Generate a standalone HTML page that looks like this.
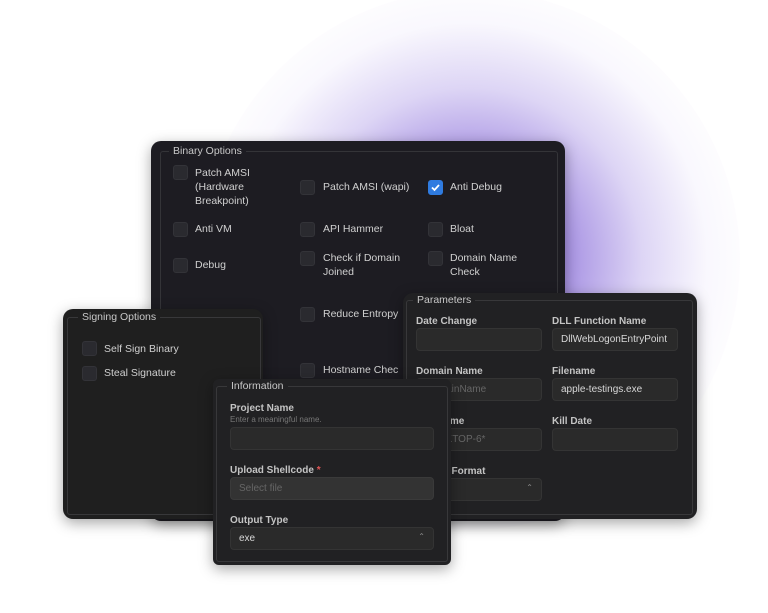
<!DOCTYPE html>
<html><head><style>
*{box-sizing:border-box;margin:0;padding:0}
body{width:768px;height:613px;overflow:hidden;background:#fff;font-family:"Liberation Sans",sans-serif;font-size:11px;color:#d6d6d6;position:relative}
.glow{position:absolute;left:200px;top:-10px;width:540px;height:540px;border-radius:50%;background:radial-gradient(circle at 50% 50%,rgba(110,70,200,.95) 0%,rgba(130,100,215,.7) 25%,rgba(170,150,230,.4) 45%,rgba(215,205,245,.15) 62%,rgba(255,255,255,0) 75%)}
.panel{position:absolute;border-radius:10px;box-shadow:0 4px 14px rgba(0,0,0,.35)}
.fs{position:absolute;border:1px solid #3a3a3e;border-radius:3px}
.lg{position:absolute;top:-7px;left:8px;padding:0 4px;font-size:10.5px;color:#c8c8c8}
.cb{position:absolute;width:15px;height:15px;border-radius:3px;background:#2a2a2f;border:1px solid #333338}
.t{position:absolute;line-height:14px;font-size:10.5px;color:#d0d0d0}
.lab{position:absolute;font-size:10px;font-weight:bold;color:#c4c4c4}
.in{position:absolute;height:23px;border-radius:4px;background:#2a2a2a;border:1px solid #343434;font-size:10px;color:#d8d8d8;padding:5px 8px}
.ph{color:#666}
</style></head><body>
<div class="glow"></div>

<div class="panel" style="left:151px;top:141px;width:414px;height:380px;background:#1d1c22">
 <div class="fs" style="left:9px;top:10px;width:398px;height:360px;border-color:#343438"><span class="lg" style="background:#1d1c22">Binary Options</span></div>
 <div class="cb" style="left:22px;top:24px"></div><div class="t" style="left:44px;top:25px">Patch AMSI<br>(Hardware<br>Breakpoint)</div>
 <div class="cb" style="left:149px;top:39px"></div><div class="t" style="left:172px;top:39px">Patch AMSI (wapi)</div>
 <div class="cb" style="left:277px;top:39px;background:#2f7be0;border-color:#2f7be0"><svg width="13" height="13" viewBox="0 0 13 13"><path d="M3 6.5l2.5 2.5L10 4" stroke="#fff" stroke-width="1.8" fill="none"/></svg></div><div class="t" style="left:299px;top:39px">Anti Debug</div>
 <div class="cb" style="left:22px;top:81px"></div><div class="t" style="left:44px;top:81px">Anti VM</div>
 <div class="cb" style="left:149px;top:81px"></div><div class="t" style="left:172px;top:81px">API Hammer</div>
 <div class="cb" style="left:277px;top:81px"></div><div class="t" style="left:299px;top:81px">Bloat</div>
 <div class="cb" style="left:22px;top:117px"></div><div class="t" style="left:44px;top:117px">Debug</div>
 <div class="cb" style="left:149px;top:110px"></div><div class="t" style="left:172px;top:110px">Check if Domain<br>Joined</div>
 <div class="cb" style="left:277px;top:110px"></div><div class="t" style="left:299px;top:110px">Domain Name<br>Check</div>
 <div class="cb" style="left:149px;top:166px"></div><div class="t" style="left:172px;top:166px">Reduce Entropy</div>
 <div class="cb" style="left:149px;top:222px"></div><div class="t" style="left:172px;top:222px">Hostname Chec</div>
</div>

<div class="panel" style="left:403px;top:293px;width:294px;height:226px;background:#212123">
 <div class="fs" style="left:3px;top:7px;width:287px;height:215px;border-color:#38383a"><span class="lg" style="background:#212123;left:6px">Parameters</span></div>
 <div class="lab" style="left:13px;top:23px">Date Change</div><div class="in" style="left:13px;top:35px;width:126px"></div>
 <div class="lab" style="left:149px;top:23px">DLL Function Name</div><div class="in" style="left:149px;top:35px;width:126px">DllWebLogonEntryPoint</div>
 <div class="lab" style="left:13px;top:73px">Domain Name</div><div class="in ph" style="left:13px;top:85px;width:126px">DomainName</div>
 <div class="lab" style="left:149px;top:73px">Filename</div><div class="in" style="left:149px;top:85px;width:126px">apple-testings.exe</div>
 <div class="lab" style="left:13px;top:123px">Hostname</div><div class="in ph" style="left:13px;top:135px;width:126px">DESKTOP-6*</div>
 <div class="lab" style="left:149px;top:123px">Kill Date</div><div class="in" style="left:149px;top:135px;width:126px"></div>
 <div class="lab" style="left:13px;top:173px">Output Format</div><div class="in" style="left:13px;top:185px;width:126px"><span style="position:absolute;right:8px;top:4px;font-size:8px;color:#888">⌃</span></div>
</div>

<div class="panel" style="left:63px;top:309px;width:200px;height:210px;background:#1f1f1f">
 <div class="fs" style="left:4px;top:8px;width:194px;height:198px;border-color:#38383a"><span class="lg" style="background:#1f1f1f;left:10px">Signing Options</span></div>
 <div class="cb" style="left:19px;top:32px"></div><div class="t" style="left:41px;top:33px">Self Sign Binary</div>
 <div class="cb" style="left:19px;top:57px"></div><div class="t" style="left:41px;top:57px">Steal Signature</div>
</div>

<div class="panel" style="left:213px;top:379px;width:238px;height:186px;background:#212123;border-radius:6px">
 <div class="fs" style="left:3px;top:7px;width:232px;height:176px;border-color:#38383a"><span class="lg" style="background:#212123;left:10px">Information</span></div>
 <div class="lab" style="left:17px;top:24px">Project Name</div>
 <div style="position:absolute;left:17px;top:36px;font-size:8px;color:#777">Enter a meaningful name.</div>
 <div class="in" style="left:17px;top:48px;width:204px"></div>
 <div class="lab" style="left:17px;top:86px">Upload Shellcode <span style="color:#e05555">*</span></div>
 <div class="in ph" style="left:17px;top:98px;width:204px;background:#333;border-color:#3a3a3a">Select file</div>
 <div class="lab" style="left:17px;top:136px">Output Type</div>
 <div class="in" style="left:17px;top:148px;width:204px">exe<span style="position:absolute;right:8px;top:4px;font-size:8px;color:#888">⌃</span></div>
</div>
</body></html>
